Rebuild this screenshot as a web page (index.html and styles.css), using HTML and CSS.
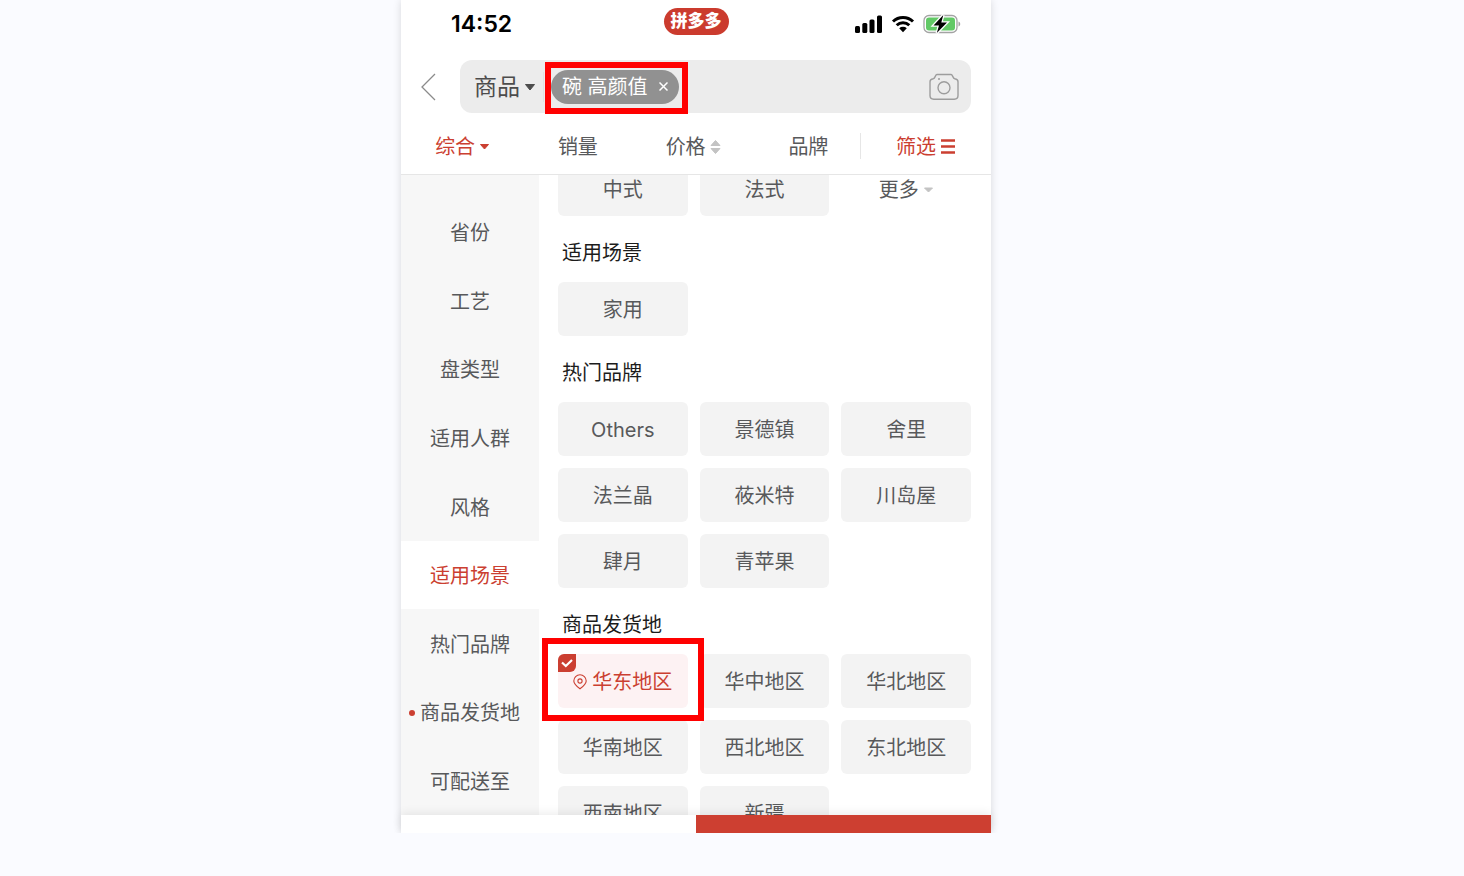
FILE: index.html
```html
<!DOCTYPE html>
<html lang="zh-CN">
<head>
    <meta charset="UTF-8">
    <meta name="viewport" content="width=device-width, initial-scale=1.0">
    <title>商品筛选</title>
    <link rel="stylesheet" href="styles.css">
</head>
<body>
    <main class="phone">
        <div class="status">
            <span class="time">14:52</span>
            <span class="logo">拼多多</span>
            <div class="status-icons">
                <svg width="28" height="18" viewBox="0 0 28 18">
                    <rect x="0" y="11" width="5" height="7" rx="1.5"/>
                    <rect x="7.300" y="8" width="5" height="10" rx="1.500"/>
                    <rect x="14.500" y="4.500" width="5" height="13.500" rx="1.500"/>
                    <rect x="22" y="0.500" width="5" height="17.500" rx="1.500"/>
                </svg>
                <svg width="24" height="18" viewBox="0 0 24 18">
                    <path d="M2 6.500A14.500 14.500 0 0 1 22 6.500M5.700 10.300A9 9 0 0 1 18.300 10.300" fill="none" stroke="#000" stroke-width="3"/>
                    <path d="M8.200 13.200a5.600 5.600 0 0 1 7.600 0L12 17.200z"/>
                </svg>
                <svg width="38" height="20" viewBox="0 0 38 20">
                    <rect x="1" y="1.500" width="33" height="17" rx="5" fill="#fff" stroke="#a3a3a3" stroke-width="1.300"/>
                    <rect x="3" y="3.500" width="29" height="13" rx="3" fill="#62c966"/>
                    <path d="M35.500 7.500v5c2.300-.8 2.300-4.200 0-5z" fill="#a3a3a3"/>
                    <path d="M20.300 1L10.500 11.500h5.500L13.800 19 24 8.500h-5.700z" stroke="#fff" stroke-width="2.600" paint-order="stroke"/>
                </svg>
            </div>
        </div>

        <div class="search-row">
            <button class="back" aria-label="返回">
                <svg width="16" height="28" viewBox="0 0 16 28"><path d="M14 1L1 14l13 13" fill="none" stroke="#8b8b8b" stroke-width="1.300"/></svg>
            </button>
            <div class="search">
                <button class="search-type">商品
                    <svg width="12" height="8" viewBox="0 0 12 8"><path d="M1.500 1.500h9L6 7z" fill="#4c4c4c" stroke="#4c4c4c" stroke-linejoin="round"/></svg>
                </button>
                <button class="keyword">碗 高颜值
                    <svg width="9" height="9" viewBox="0 0 9 9"><path d="M.5.500l8 8m0-8l-8 8" stroke="#fff" stroke-width="1.500"/></svg>
                    <span class="mark mark-keyword"></span>
                </button>
                <input class="search-input" type="text" aria-label="搜索商品">
                <button class="camera" aria-label="拍照搜索">
                    <svg width="30" height="28" viewBox="0 0 30 28" fill="none" stroke="#9d9d9d" stroke-width="1.400">
                        <path d="M8 1.500h14c1.800 0 1.600 3.800 3.800 4.300 2 .4 3.200.8 3.200 3V22.500c0 2.400-1.400 3.700-3.700 3.700H4.700C2.400 26.200 1 24.900 1 22.500V8.800c0-2.200 1.200-2.600 3.200-3C6.400 5.300 6.200 1.500 8 1.500z"/>
                        <circle cx="15" cy="14.800" r="6"/>
                        <circle cx="10" cy="6" r="1" fill="#9d9d9d" stroke="none"/>
                    </svg>
                </button>
            </div>
        </div>

        <nav class="tabs">
            <button class="tab active">综合
                <svg width="11" height="8" viewBox="0 0 11 8"><path d="M1.500 1.500h8l-4 4.500z" fill="#cb3f31" stroke="#cb3f31" stroke-linejoin="round"/></svg>
            </button>
            <button class="tab">销量</button>
            <button class="tab">价格
                <svg width="11" height="16" viewBox="0 0 11 16"><path d="M1 6.500L5.500 1.500 10 6.500zM1 9.500h9l-4.500 5z" fill="#c3c3c3" stroke="#c3c3c3" stroke-linejoin="round"/></svg>
            </button>
            <button class="tab">品牌</button>
            <span class="divider"></span>
            <button class="filter active">筛选
                <svg width="16" height="16" viewBox="0 0 16 16"><path d="M1 1.500h14M1 7.500h14M1 13.500h14" stroke="#cb3f31" stroke-width="2.400"/></svg>
            </button>
        </nav>

        <div class="panel">
            <div class="sidebar">
                <button class="side-item">省份</button>
                <button class="side-item">工艺</button>
                <button class="side-item">盘类型</button>
                <button class="side-item">适用人群</button>
                <button class="side-item">风格</button>
                <button class="side-item current">适用场景</button>
                <button class="side-item">热门品牌</button>
                <button class="side-item"><span class="dot"></span>商品发货地</button>
                <button class="side-item">可配送至</button>
            </div>

            <div class="options">
                <div class="grid">
                    <button class="option">中式</button>
                    <button class="option">法式</button>
                    <button class="more">更多
                        <svg width="11" height="8" viewBox="0 0 11 8"><path d="M1.500 2h8l-4 4z" fill="#c3c3c3" stroke="#c3c3c3" stroke-linejoin="round"/></svg>
                    </button>
                </div>

                <h2>适用场景</h2>
                <div class="grid">
                    <button class="option">家用</button>
                </div>

                <h2>热门品牌</h2>
                <div class="grid">
                    <button class="option">Others</button>
                    <button class="option">景德镇</button>
                    <button class="option">舍里</button>
                    <button class="option">法兰晶</button>
                    <button class="option">莜米特</button>
                    <button class="option">川岛屋</button>
                    <button class="option">肆月</button>
                    <button class="option">青苹果</button>
                </div>

                <h2>商品发货地</h2>
                <div class="grid">
                    <button class="option selected" aria-pressed="true">
                        <svg class="check" width="18" height="18" viewBox="0 0 18 18">
                            <path d="M6 0h12v12a6 6 0 0 1-6 6H0V6a6 6 0 0 1 6-6z" fill="#cb3f31"/>
                            <path d="M4 8.500l3.800 3.500L14 6" fill="none" stroke="#fff" stroke-width="2.200"/>
                        </svg>
                        <svg width="14" height="16" viewBox="0 0 14 16" fill="none" stroke="#cb3f31" stroke-width="1.100">
                            <path d="M7 14.800C4.500 13 .8 10.300.8 7a6.200 6.200 0 0 1 12.400 0c0 3.300-3.700 6-6.200 7.800z"/>
                            <circle cx="7" cy="7" r="2.100"/>
                        </svg>
                        华东地区
                        <span class="mark mark-option"></span>
                    </button>
                    <button class="option">华中地区</button>
                    <button class="option">华北地区</button>
                    <button class="option">华南地区</button>
                    <button class="option">西北地区</button>
                    <button class="option">东北地区</button>
                    <button class="option">西南地区</button>
                    <button class="option">新疆</button>
                </div>
            </div>
        </div>

        <div class="bottom">
            <button class="reset" aria-label="重置"></button>
            <button class="confirm" aria-label="确定"></button>
        </div>
    </main>
</body>
</html>
```

FILE: styles.css
```css
*{
    box-sizing: border-box;
}

body{
    margin: 0;
    display: grid;
    grid-template-columns: 401fr minmax(0, 590fr) 473fr;
    background-color: #fafbff;
    font-family: Inter, "Noto Sans CJK SC", sans-serif;
    font-size: 20px;
    color: #58595b;
}

button{
    display: flex;
    align-items: center;
    justify-content: center;
    padding: 0;
    border: none;
    background: none;
    color: inherit;
    font: inherit;
    line-height: 30px;
    white-space: nowrap;
}

svg{
    flex: none;
}

.phone{
    grid-column: 2;
    display: flex;
    flex-direction: column;
    height: calc(100vh - 43px);
    background-color: white;
    box-shadow: 0 0 8px rgba(0, 0, 0, 0.14);
    clip-path: inset(0 -10px);
}

/* status bar */
.status{
    display: grid;
    grid-template-columns: 1fr auto 1fr;
    align-items: center;
    height: 48px;
    padding: 0 30px 0 50px;
}

.time{
    color: black;
    font-size: 23px;
    font-weight: 600;
}

.logo{
    margin: 0 20px 5px 0;
    padding: 0 7px;
    border-radius: 14px;
    background-color: #cb3b2e;
    color: white;
    font-size: 17px;
    font-weight: 900;
    line-height: 27px;
}

.status-icons{
    display: flex;
    align-items: center;
    justify-content: flex-end;
    gap: 8px;
}

/* search */
.search-row{
    display: flex;
    align-items: center;
    gap: 23px;
    padding: 12px 20px 5px;
}

.search{
    flex: 1;
    min-width: 0;
    display: flex;
    align-items: center;
    height: 53px;
    padding: 0 12px 0 14px;
    border-radius: 12px;
    background-color: #ececec;
}

.search-type{
    gap: 4px;
    margin-right: 7px;
    padding-right: 7px;
    border-right: 1px solid #e2e2e2;
    color: #4c4c4c;
    font-size: 23px;
}

.keyword{
    position: relative;
    gap: 11px;
    height: 34px;
    padding: 0 11px;
    border-radius: 17px;
    background-color: #919191;
    color: white;
}

.search-input{
    flex: 1;
    width: 0;
    min-width: 0;
    height: 34px;
    padding: 0 12px;
    border: none;
    outline: none;
    background: none;
    font: inherit;
}

/* red frames */
.mark{
    position: absolute;
    z-index: 1;
    border: 6px solid red;
}

.mark-keyword{
    inset: -8px -9px -10px -6px;
}

.mark-option{
    inset: -16px -16px -13px -16px;
}

/* sort tabs */
.tabs{
    display: flex;
    align-items: center;
    height: 57px;
    padding-left: 4px;
    border-bottom: 1px solid #e6e6e6;
}

.tab{
    flex: 1;
    gap: 4px;
}

.filter{
    flex: none;
    width: 130px;
    gap: 4px;
}

.tab,
.filter,
.side-item,
.option,
.more{
    padding-top: 2px;
}

.active{
    color: #cb3f31;
}

.divider{
    width: 1px;
    height: 26px;
    margin-left: -6px;
    background-color: #e6e6e6;
}

/* panel */
.panel{
    flex: 1;
    min-height: 0;
    display: flex;
    overflow: hidden;
}

.sidebar{
    width: 138px;
    display: flex;
    flex-direction: column;
    padding-top: 23px;
    background-color: #f7f7f7;
}

.side-item{
    position: relative;
    flex: 1;
}

.current{
    background-color: white;
    color: #cb3f31;
}

.dot{
    position: absolute;
    left: 8px;
    width: 6px;
    height: 6px;
    border-radius: 3px;
    background-color: #cb3f31;
}

.options{
    flex: 1;
    margin-top: -13px;
    padding: 0 20px 0 19px;
}

.options h2{
    margin: 0;
    padding: 22px 4px 14px;
    color: #1c1c1c;
    font-size: 20px;
    font-weight: 400;
    line-height: 30px;
}

.grid{
    display: grid;
    grid-template-columns: repeat(3, 1fr);
    gap: 12px;
}

.option{
    height: 54px;
    border-radius: 6px;
    background-color: #f3f3f3;
}

.more{
    gap: 4px;
}

.selected{
    position: relative;
    gap: 5px;
    background-color: #fdf2f3;
    color: #cb3f31;
}

.check{
    position: absolute;
    top: 0;
    left: 0;
}

/* bottom bar */
.bottom{
    position: relative;
    display: grid;
    grid-template-columns: 1fr 1fr;
    height: 18px;
    box-shadow: 0 -2px 10px rgba(0, 0, 0, 0.08);
}

.reset{
    background-color: white;
}

.confirm{
    background-color: #cd3f31;
}
```
